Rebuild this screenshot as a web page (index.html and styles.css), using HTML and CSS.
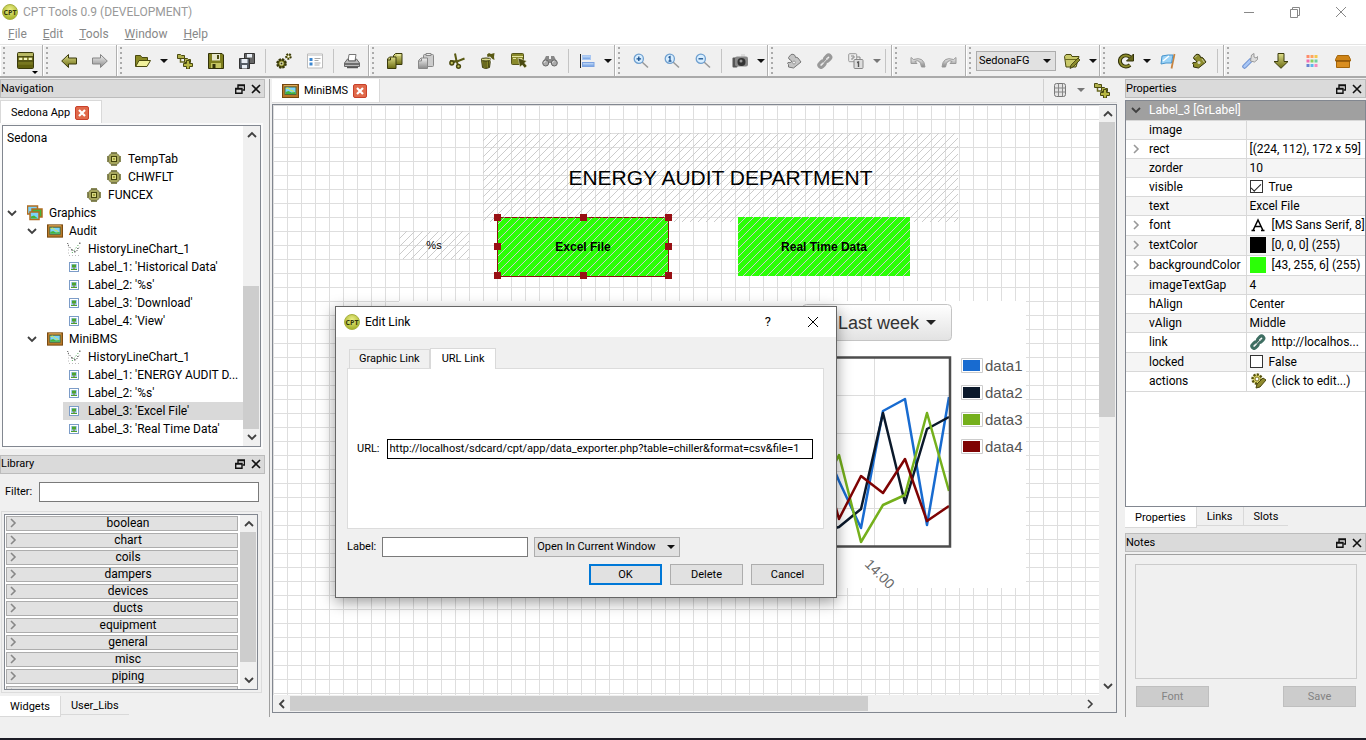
FILE: index.html
```html
<!DOCTYPE html>
<html lang="en">
<head>
<meta charset="utf-8">
<title>CPT Tools 0.9 (DEVELOPMENT)</title>
<link rel="stylesheet" href="styles.css">
</head>
<body>
<svg class="defs" aria-hidden="true">
  <defs>
    <linearGradient id="olive" x1="0" y1="0" x2="0" y2="1"><stop offset="0" stop-color="#dede8a"/><stop offset="1" stop-color="#6b6b12"/></linearGradient>
    <linearGradient id="grey" x1="0" y1="0" x2="0" y2="1"><stop offset="0" stop-color="#f2f2f2"/><stop offset="1" stop-color="#8a8a8a"/></linearGradient>
    <linearGradient id="blue" x1="0" y1="0" x2="0" y2="1"><stop offset="0" stop-color="#cde2fb"/><stop offset="1" stop-color="#6b9be0"/></linearGradient>
    <radialGradient id="ball" cx=".5" cy=".35" r=".6"><stop offset="0" stop-color="#eef08a"/><stop offset="1" stop-color="#a8b52c"/></radialGradient>
    <linearGradient id="btn" x1="0" y1="0" x2="0" y2="1"><stop offset="0" stop-color="#fff"/><stop offset="1" stop-color="#e2e2e2"/></linearGradient>
    <symbol id="i-board" viewBox="0 0 16 16"><rect x=".5" y=".5" width="15" height="15" rx="1.500" fill="#77771f" stroke="#3a3a0c"/><path d="M1 1h14v3H1z" fill="#b9b965"/><path d="M1 4.500h14M1 8.500h14" stroke="#3a3a0c"/><path d="M2 6.500h3M6.500 6.500h3M11 6.500h3" stroke="#f4f4c0" stroke-width="2"/><path d="M1 12h14v3H1z" fill="#62620f"/></symbol>
    <symbol id="i-left" viewBox="0 0 16 16"><path d="M.7 8 7.500 1.500V5h8v6h-8v3.500z" fill="url(#olive)" stroke="#3a3a0c"/></symbol>
    <symbol id="i-right" viewBox="0 0 16 16"><path d="M15.300 8 8.500 1.500V5h-8v6h8v3.500z" fill="url(#grey)" stroke="#858585"/></symbol>
    <symbol id="i-down" viewBox="0 0 16 16"><path d="M8 15.300 1 8.500h4v-8h6v8h4z" fill="url(#olive)" stroke="#3a3a0c"/></symbol>
    <symbol id="i-open" viewBox="0 0 16 16"><path d="M.5 13.500V2.500h5l1.500 2h5.500v3" fill="#8a8a24" stroke="#4a4a10"/><path d="M.7 13.500 4 7.500h11.500L12 13.500z" fill="#f1f19c" stroke="#4a4a10"/></symbol>
    <symbol id="i-addfile" viewBox="0 0 16 16"><path d="M.5 1.500h3l1 1h3v3h-7zM7.500 5.500h3l1 1h2v3h-6z" fill="#b0b04c" stroke="#4a4a10"/><path d="M3.500 6v3h4" fill="none" stroke="#6a6a20" stroke-width="1.500"/><path d="M9.500 7.500h3v3h3v3h-3V16h-3v-2.500h-3v-3h3z" fill="#b7b742" stroke="#4a4a10"/></symbol>
    <symbol id="i-save" viewBox="0 0 16 16"><path d="M.5.5H14l1.500 1.500v13.500H.5z" fill="#7e7e1e" stroke="#33330a"/><path d="M4 1h8v6.500H4z" fill="#e5e5cc"/><path d="M9 2h2v4H9z" fill="#4a4a10"/><path d="M3 10h10v5H3z" fill="#c5c560"/><path d="M4.500 11h3v4h-3z" fill="#33330a"/></symbol>
    <symbol id="i-saveall" viewBox="0 0 16 16"><path d="M5.500.5h10v10h-10z" fill="#666" stroke="#333"/><path d="M8 1h5v3.500H8z" fill="#e8eef5"/><path d="M.5 5.500h10v10H.5z" fill="#555d66" stroke="#333"/><path d="M2.500 6h6v4h-6zM3 12h5v3.500H3z" fill="#e8eef5"/></symbol>
    <symbol id="i-gears" viewBox="0 0 16 16"><circle cx="5.500" cy="10.500" r="4.200" fill="#55550f" stroke="#38380a" stroke-width="2.200" stroke-dasharray="2.200 1.100"/><circle cx="5.500" cy="10.500" r="2.200" fill="#f0f0d0" stroke="#9a9a35"/><circle cx="5.500" cy="10.500" r="1" fill="#38380a"/><circle cx="12.500" cy="3.500" r="2.300" fill="#a5a542" stroke="#38380a" stroke-width="2" stroke-dasharray="1.600 1"/><circle cx="12.500" cy="3.500" r="1" fill="#fff"/></symbol>
    <symbol id="i-form" viewBox="0 0 16 16"><path d="M.5 1h15v14H.5z" fill="#fff" stroke="#bbb"/><path d="M1 1.500h14v1.500H1z" fill="#ddd"/><path d="M2.500 5h3v3h-3zM2.500 9.500h3v3h-3z" fill="#3b86cf"/><path d="M7.500 5.500h6M7.500 7.500h4M7.500 10h6M7.500 12h5" stroke="#aaa"/></symbol>
    <symbol id="i-print" viewBox="0 0 16 16"><path d="M5 1.500h7L11 8H4z" fill="#fff" stroke="#777"/><path d="m3.500 6-3 4v3.500h15V10l-3-4h-1v2h-7V6z" fill="#bbb" stroke="#666"/><path d="M1 11h14M3 14.500h11" stroke="#555" stroke-width="1.500"/></symbol>
    <symbol id="i-copy" viewBox="0 0 16 16"><path d="M6.500 2.500 8.500.5h6.500v11H6.500z" fill="url(#olive)" stroke="#3a3a0c"/><path d="M10 2h3.500" stroke="#f5f5c0"/><path d="m.5 6 2-2H9v11.500H.5z" fill="url(#olive)" stroke="#3a3a0c"/><path d="M3.500 4.500v2.500H1" fill="none" stroke="#3a3a0c"/></symbol>
    <symbol id="i-paste" viewBox="0 0 16 16"><rect x="5.500" y="1.500" width="10" height="12" rx="1" fill="#ccc" stroke="#888"/><path d="M8 .5h5v2H8z" fill="#eee" stroke="#888"/><path d="M.5 7.500 3 5h6.500v10.500h-9z" fill="url(#grey)" stroke="#888"/><path d="M3.500 5.500V8H1" fill="none" stroke="#888"/></symbol>
    <symbol id="i-cut" viewBox="0 0 16 16"><path d="M6 .5 7.500 8 4 9.500M15.500 5.500 8 8.500 1 8M7.500 8l1.500 4" fill="none" stroke="#5a5a14" stroke-width="2"/><circle cx="2.800" cy="10" r="1.900" fill="#c5c560" stroke="#4a4a10" stroke-width="1.500"/><circle cx="9.500" cy="13.300" r="1.900" fill="#c5c560" stroke="#4a4a10" stroke-width="1.500"/></symbol>
    <symbol id="i-trash" viewBox="0 0 16 16"><path d="m1.500 6.500 1 8q3 2 7 0l1-8z" fill="#9a9a33" stroke="#3a3a0c"/><path d="M4 8v6M6 8v7M8.300 8v6" stroke="#3a3a0c"/><ellipse cx="6" cy="6.500" rx="5" ry="1.500" fill="#dada8a" stroke="#3a3a0c"/><path d="M7 1.500 9 0l2 1 3.500-1-.5 4 .5 3-2-1-2.500-2.500-2.500.5z" fill="#5a5a14"/><path d="m9.500 5 3.500 5-1.500.5z" fill="#fff"/></symbol>
    <symbol id="i-select" viewBox="0 0 16 16"><rect x=".5" y=".5" width="12" height="11" rx="1" fill="#8a8a2c" stroke="#55551a"/><path d="M1 3.500h11M2 5.500h3M7 5.500h4" stroke="#e5e5a0"/><path d="m7 5 8.500 3-2 2 2.500 3-2.300 2-2.500-3L9 14z" fill="#4a4a10" stroke="#efeec8" stroke-width=".5"/></symbol>
    <symbol id="i-find" viewBox="0 0 16 16"><path d="M4 3h3v3h2V3h3l3.500 7H.5z" fill="#888"/><circle cx="3.700" cy="10" r="3" fill="#aaa" stroke="#666"/><circle cx="12.300" cy="10" r="3" fill="#aaa" stroke="#666"/><path d="M2 10q0-2 2-2M10.500 10q0-2 2-2" stroke="#ddd" fill="none"/></symbol>
    <symbol id="i-align" viewBox="0 0 16 16"><path d="M1.500 1v14" stroke="#222"/><rect x="3.500" y="2.500" width="8" height="4" fill="url(#blue)" stroke="#a9c7f2"/><rect x="3.500" y="9.500" width="11.500" height="4" fill="url(#blue)" stroke="#7ca2e0"/></symbol>
    <symbol id="i-lens" viewBox="0 0 16 16"><path d="m9 9 6 5.500" stroke="#999" stroke-width="1.500"/><circle cx="5.800" cy="5.800" r="4.600" fill="#d8eeff" stroke="#6fa0d0" stroke-width="1.300"/></symbol>
    <symbol id="i-cam" viewBox="0 0 16 16"><rect x="9" y="1" width="4" height="3" fill="#ddd"/><rect x=".5" y="4.500" width="5" height="10" rx="1" fill="#555"/><rect x="3" y="3.500" width="13" height="10" rx="2" fill="#888"/><circle cx="9.500" cy="9" r="4" fill="#333"/><circle cx="9" cy="8" r="1.500" fill="#999"/></symbol>
    <symbol id="i-puzzle" viewBox="0 0 16 16"><path d="M2.500 4.500 5 1.500q2-1 4 1l.5 2q1.500-.5 2.500.5l3 4-7.500 6-5-1v-2.500q-1.500-1-.5-2 2.500.5 3.500-.5T3 6z" fill="currentColor" stroke="#33330c"/><path d="m4 4.500 2-2M11 6l2.500 3.500" stroke="#fff" opacity=".6"/><circle cx="8" cy="9.500" r="1.500" fill="#eee" opacity=".8"/></symbol>
    <symbol id="i-puzzle-off" viewBox="0 0 16 16"><path d="M2.500 4.500 5 1.500q2-1 4 1l.5 2q1.500-.5 2.500.5l3 4-7.500 6-5-1v-2.500q-1.500-1-.5-2 2.500.5 3.500-.5T3 6z" fill="#c4c4c4" stroke="#777"/><circle cx="8" cy="9.500" r="1.500" fill="#eee" stroke="#999"/></symbol>
    <symbol id="i-chain" viewBox="0 0 16 16"><g fill="none" stroke="currentColor" stroke-width="3"><rect x="8.500" y="1.500" width="4.500" height="7" rx="2.200" transform="rotate(45 10.500 5)"/><rect x="3" y="8" width="4.500" height="7" rx="2.200" transform="rotate(45 5.500 11)"/></g><path d="m5 11.500 6-6.500" stroke="#ddd"/></symbol>
    <symbol id="i-order" viewBox="0 0 16 16"><rect x=".7" y=".7" width="8" height="8" rx="1" fill="#eee" stroke="#999"/><path d="M3 3h3v2H4v2M9 4h3v2" fill="none" stroke="#888"/><rect x="6" y="6.500" width="9" height="9" rx="1" fill="#ddd" stroke="#888"/><path d="M9 9.500 10.500 9v5" fill="none" stroke="#555" stroke-width="1.400"/></symbol>
    <symbol id="i-undo" viewBox="0 0 16 16"><path d="M1 4.500v6h6L5 8.500q5-3 6.500 5.500h3.500Q14 3 3.500 6.500z" fill="url(#grey)" stroke="#999"/></symbol>
    <symbol id="i-folderpen" viewBox="0 0 16 16"><path d="M.5 3.500 2 1.500h5l1 2h7L12 14H2z" fill="#c9c96a" stroke="#4a4a10"/><path d="M1 6.500h13" stroke="#6a6a20"/><path d="m14 5 2 2-7 7-3 1.500L7 12z" fill="#8c8c2c" stroke="#3a3a0c" stroke-width=".8"/></symbol>
    <symbol id="i-reload" viewBox="0 0 16 16"><path d="M12 12A6 5.500 0 1 1 12 4" fill="none" stroke="#33330a" stroke-width="4"/><path d="M12 12A6 5.500 0 1 1 12 4" fill="none" stroke="#8c8c2c" stroke-width="1.800"/><path d="M15.500 1v7H8.500z" fill="#66661a" stroke="#33330a"/></symbol>
    <symbol id="i-flag" viewBox="0 0 16 16"><path d="m14.500 1-3 14.500" stroke="#c88440" stroke-width="1.800"/><path d="m2 3 6-1 5 0-1.500 8H6l-5 1z" fill="#9bd3f7" stroke="#4794cc"/><path d="m3 8 6-5" stroke="#fff" stroke-width="1.500"/></symbol>
    <symbol id="i-wrench" viewBox="0 0 16 16"><path d="m2.500 13.500 6-6" stroke="#688cce" stroke-width="4.500" stroke-linecap="round"/><path d="m2.500 13.500 6-6" stroke="#a8c6f5" stroke-width="2.500" stroke-linecap="round"/><path d="m8.500 8 1-6 2.500-1.500V4l2 1 1.700-1.500-.2 3-3 2.500z" fill="#ddd" stroke="#999"/></symbol>
    <symbol id="i-palette" viewBox="0 0 16 16"><path d="M2.500 2h3v3h-3z" fill="#ff8c69"/><path d="M6.500 2h3v3h-3z" fill="#ffa45e"/><path d="M10.500 2h3v3h-3z" fill="#f5c84c"/><path d="M2.500 6.500h3v3h-3z" fill="#f06cb0"/><path d="M6.500 6.500h3v3h-3z" fill="#8bd060"/><path d="M10.500 6.500h3v3h-3z" fill="#72cfa0"/><path d="M2.500 11h3v3h-3z" fill="#6884d0"/><path d="M6.500 11h3v3h-3z" fill="#5cb8ec"/><path d="M10.500 11h3v3h-3z" fill="#f58ac0"/></symbol>
    <symbol id="i-box" viewBox="0 0 16 16"><path d="m.5 6.500 2-4h11l2 4V8H.5z" fill="#cf8416" stroke="#a4650a"/><path d="M1.500 8h13v6.500h-13z" fill="#d98e20" stroke="#a4650a"/><path d="M1 8h14" stroke="#7f4b05"/></symbol>
    <symbol id="i-cpt" viewBox="0 0 16 16"><circle cx="8" cy="8" r="7.500" fill="url(#ball)" stroke="#a7b040"/><text x="8" y="10.500" text-anchor="middle" class="cpt-text">CPT</text></symbol>
    <symbol id="i-chip" viewBox="0 0 16 16"><path d="M5 1h6v14H5zM1 5h14v6H1z" fill="#8a8a58"/><path d="M3.500 4 5 2.500h6L12.500 4l1 1.500v5l-1 1.500-1.500 1.500H5L3.500 12l-1-1.500v-5z" fill="#a5a55c" stroke="#77774a"/><rect x="5.500" y="5.500" width="5" height="5" fill="#d8d884" stroke="#44440e"/><path d="M7 7h2v2H7z" fill="#a5a53c"/></symbol>
    <symbol id="i-frame" viewBox="0 0 17 14"><rect x=".5" y=".5" width="16" height="13" fill="#b87828" stroke="#74460d"/><path d="M2 1.500h13" stroke="#dfab5c"/><rect x="3" y="3" width="11" height="7.500" fill="#7bd3fa" stroke="#4c6a3e"/><path d="m3.500 10 0-2 3-1 3 1.500 4-.5V10z" fill="#43b43b"/><path d="m4 4.500 2-.5 3 2.500 3 1" stroke="#d9ed3e" fill="none"/></symbol>
    <symbol id="i-frames" viewBox="0 0 16 16"><rect x=".5" y="1" width="10" height="8" fill="#7bd3fa" stroke="#b06c20" stroke-width="1.500"/><rect x="5" y="4" width="10" height="8" fill="#43b43b" stroke="#b06c20" stroke-width="1.500"/><rect x="3" y="7" width="9" height="7.500" fill="#7bd3fa" stroke="#b06c20" stroke-width="1.500"/><path d="M4 13.500v-2l3-1 4 3z" fill="#43b43b"/></symbol>
    <symbol id="i-chart" viewBox="0 0 16 16"><g fill="none" stroke-dasharray="1 2"><path d="M2.500 2.500v12M3 14.500h11" stroke="#bbb"/><path d="m6 12 3-4 5-6" stroke="#2d9b35"/><path d="m2 4 4 5 4 2 4-6" stroke="#333"/></g><path d="M1 2h1v1H1zM5 8h1.500v1.500H5zM8 10h1.500v1.500H8zM11 7h1v1h-1zM13 1.500h1.500V3H13z" fill="#777"/></symbol>
    <symbol id="i-label" viewBox="0 0 10 10"><rect x=".5" y=".5" width="9" height="9" fill="#fff" stroke="#7c9cc8"/><path d="M2 2h6v6H2z" fill="#a6cdf0"/><path d="M3 2.500h4v3H3zM2 7h6v1H2z" fill="#4ba32e"/><path d="M4.500 5.500h1V7h-1z" fill="#7b5520"/></symbol>
    <symbol id="i-float" viewBox="0 0 10 10"><path d="M3 4V1h6.500v5H7.500M3 1.500h6.500" fill="none" stroke="#111" stroke-width="1.400"/><path d="M.7 4.500h6.300v4.800H.7zM.7 5h6.300" fill="none" stroke="#111" stroke-width="1.400"/></symbol>
    <symbol id="i-x" viewBox="0 0 10 10"><path d="m1 1 8 8M9 1 1 9" stroke="#111" stroke-width="1.600"/></symbol>
    <symbol id="i-close" viewBox="0 0 14 14"><rect x=".5" y=".5" width="13" height="13" rx="1.500" fill="#e0694a" stroke="#c8402a"/><path d="m4 4 6 6M10 4l-6 6" stroke="#fff" stroke-width="2.200"/></symbol>
    <symbol id="i-chevd" viewBox="0 0 10 10"><path d="m1 3 4 4 4-4" fill="none" stroke="#404040" stroke-width="1.800"/></symbol>
    <symbol id="i-chevu" viewBox="0 0 10 10"><path d="m1 7 4-4 4 4" fill="none" stroke="#404040" stroke-width="1.800"/></symbol>
    <symbol id="i-chevr" viewBox="0 0 10 10"><path d="m3 1 4 4-4 4" fill="none" stroke="currentColor" stroke-width="1.600"/></symbol>
    <symbol id="i-chevl" viewBox="0 0 10 10"><path d="M7 1 3 5l4 4" fill="none" stroke="#404040" stroke-width="1.800"/></symbol>
    <symbol id="i-grid" viewBox="0 0 16 16"><rect x="2.500" y="1.500" width="11" height="13" rx="2" fill="#e4e4e4" stroke="#777"/><path d="M6.500 1.500v13M10.500 1.500v13M2.500 6h11M2.500 10h11" stroke="#888"/></symbol>
    <symbol id="i-edit" viewBox="0 0 16 16"><circle cx="7" cy="6" r="4.500" fill="#e2db6c" stroke="#58540f" stroke-width="2.500" stroke-dasharray="2.200 1.200"/><circle cx="7" cy="6" r="2" fill="#fff" stroke="#77701f"/><path d="m6 15 1-4 6-6 3 2-6 7z" fill="#8f8a2e" stroke="#4a460c"/></symbol>
  </defs>
</svg>

<header class="titlebar">
  <svg class="ic16"><use href="#i-cpt"/></svg>
  <span class="title">CPT Tools 0.9 (DEVELOPMENT)</span>
  <button class="winbtn" aria-label="Minimize"><svg viewBox="0 0 12 12"><path d="M1 6.500h10"/></svg></button>
  <button class="winbtn" aria-label="Restore"><svg viewBox="0 0 12 12"><path d="M1.500 3.500h7v8h-7zM3.500 3.500v-2h7v8h-2"/></svg></button>
  <button class="winbtn" aria-label="Close"><svg viewBox="0 0 12 12"><path d="m1 1 10 10M11 1 1 11"/></svg></button>
</header>
<nav class="menubar">
  <button><u>F</u>ile</button><button><u>E</u>dit</button><button><u>T</u>ools</button><button><u>W</u>indow</button><button><u>H</u>elp</button>
</nav>

<div class="toolbar">
  <div class="group"><button class="tool" aria-label="Board"><svg class="big"><use href="#i-board"/></svg><i class="corner"></i></button></div>
  <div class="group"><button class="tool" aria-label="Back"><svg><use href="#i-left"/></svg></button><button class="tool" aria-label="Forward"><svg><use href="#i-right"/></svg></button></div>
  <div class="group"><button class="tool" aria-label="Open"><svg><use href="#i-open"/></svg></button><button class="drop" aria-label="Open menu"></button><button class="tool" aria-label="Add"><svg><use href="#i-addfile"/></svg></button><button class="tool" aria-label="Save"><svg><use href="#i-save"/></svg></button><button class="tool" aria-label="Save all"><svg><use href="#i-saveall"/></svg></button><i class="sep"></i><button class="tool" aria-label="Settings"><svg><use href="#i-gears"/></svg></button><button class="tool" aria-label="Form"><svg><use href="#i-form"/></svg></button><i class="sep"></i><button class="tool" aria-label="Print"><svg><use href="#i-print"/></svg></button></div>
  <div class="group"><button class="tool" aria-label="Copy"><svg><use href="#i-copy"/></svg></button><button class="tool" aria-label="Paste"><svg><use href="#i-paste"/></svg></button><button class="tool" aria-label="Cut"><svg><use href="#i-cut"/></svg></button><button class="tool" aria-label="Delete"><svg><use href="#i-trash"/></svg></button><button class="tool" aria-label="Select"><svg><use href="#i-select"/></svg></button><button class="tool" aria-label="Find"><svg><use href="#i-find"/></svg></button><i class="sep"></i><button class="tool" aria-label="Align"><svg><use href="#i-align"/></svg></button><button class="drop" aria-label="Align menu"></button></div>
  <div class="group"><button class="tool" aria-label="Zoom in"><svg viewBox="0 0 16 16"><use href="#i-lens"/><path d="M3.500 5.800h4.600M5.800 3.500v4.600" stroke="#174e8c" stroke-width="1.300"/></svg></button><button class="tool" aria-label="Zoom 1:1"><svg viewBox="0 0 16 16"><use href="#i-lens"/><path d="m4.500 4.500 1.500-1v5M4.500 8.200h3" fill="none" stroke="#174e8c" stroke-width="1.200"/></svg></button><button class="tool" aria-label="Zoom out"><svg viewBox="0 0 16 16"><use href="#i-lens"/><path d="M3.500 5.800h4.600" stroke="#174e8c" stroke-width="1.300"/></svg></button><i class="sep"></i><button class="tool" aria-label="Camera"><svg><use href="#i-cam"/></svg></button><button class="drop" aria-label="Camera menu"></button></div>
  <div class="group"><button class="tool" aria-label="Component"><svg><use href="#i-puzzle-off"/></svg></button><button class="tool" aria-label="Link"><svg><use href="#i-chain"/></svg></button><button class="tool" aria-label="Order"><svg><use href="#i-order"/></svg></button><button class="drop dim" aria-label="Order menu"></button><i class="sep"></i></div>
  <div class="group"><button class="tool" aria-label="Undo"><svg><use href="#i-undo"/></svg></button><button class="tool" aria-label="Redo"><svg class="flip"><use href="#i-undo"/></svg></button></div>
  <div class="group"><span class="combo combo-project"><select aria-label="Project"><option>SedonaFG</option></select></span><button class="tool" aria-label="Edit project"><svg><use href="#i-folderpen"/></svg></button><button class="drop" aria-label="Project menu"></button></div>
  <div class="group"><button class="tool" aria-label="Reload"><svg><use href="#i-reload"/></svg></button><button class="drop" aria-label="Reload menu"></button><button class="tool" aria-label="Flag"><svg><use href="#i-flag"/></svg></button><button class="tool on" aria-label="Plugin"><svg><use href="#i-puzzle"/></svg></button><i class="sep"></i></div>
  <div class="group last"><button class="tool" aria-label="Tools"><svg><use href="#i-wrench"/></svg></button><button class="tool" aria-label="Download"><svg><use href="#i-down"/></svg></button><button class="tool" aria-label="Palette"><svg><use href="#i-palette"/></svg></button><button class="tool" aria-label="Package"><svg><use href="#i-box"/></svg></button></div>
</div>

<main class="work">
  <aside class="left">
    <div class="dockhead"><h2>Navigation</h2><button aria-label="Float"><svg><use href="#i-float"/></svg></button><button aria-label="Close"><svg><use href="#i-x"/></svg></button></div>
    <div class="toptabs"><button class="tab active">Sedona App <svg class="ic14"><use href="#i-close"/></svg></button></div>
    <section class="treebox">
      <div class="treemain">
        <div class="treehead">Sedona</div>
        <ul class="tree">
          <li class="d5"><svg class="ic16"><use href="#i-chip"/></svg>TempTab</li>
          <li class="d5"><svg class="ic16"><use href="#i-chip"/></svg>CHWFLT</li>
          <li class="d4"><svg class="ic16"><use href="#i-chip"/></svg>FUNCEX</li>
          <li class="d1"><svg class="tw"><use href="#i-chevd"/></svg><svg class="ic16"><use href="#i-frames"/></svg>Graphics</li>
          <li class="d2"><svg class="tw"><use href="#i-chevd"/></svg><svg class="ic16"><use href="#i-frame"/></svg>Audit</li>
          <li class="d3"><svg class="ic16"><use href="#i-chart"/></svg>HistoryLineChart_1</li>
          <li class="d3"><svg class="ic16 lab"><use href="#i-label"/></svg>Label_1: 'Historical Data'</li>
          <li class="d3"><svg class="ic16 lab"><use href="#i-label"/></svg>Label_2: '%s'</li>
          <li class="d3"><svg class="ic16 lab"><use href="#i-label"/></svg>Label_3: 'Download'</li>
          <li class="d3"><svg class="ic16 lab"><use href="#i-label"/></svg>Label_4: 'View'</li>
          <li class="d2"><svg class="tw"><use href="#i-chevd"/></svg><svg class="ic16"><use href="#i-frame"/></svg>MiniBMS</li>
          <li class="d3"><svg class="ic16"><use href="#i-chart"/></svg>HistoryLineChart_1</li>
          <li class="d3"><svg class="ic16 lab"><use href="#i-label"/></svg>Label_1: 'ENERGY AUDIT D...</li>
          <li class="d3"><svg class="ic16 lab"><use href="#i-label"/></svg>Label_2: '%s'</li>
          <li class="d3 sel"><svg class="ic16 lab"><use href="#i-label"/></svg>Label_3: 'Excel File'</li>
          <li class="d3"><svg class="ic16 lab"><use href="#i-label"/></svg>Label_3: 'Real Time Data'</li>
        </ul>
      </div>
      <div class="vscroll"><svg><use href="#i-chevu"/></svg><div class="track"><i class="thumb nav-thumb"></i></div><svg><use href="#i-chevd"/></svg></div>
    </section>
    <div class="dockhead"><h2>Library</h2><button aria-label="Float"><svg><use href="#i-float"/></svg></button><button aria-label="Close"><svg><use href="#i-x"/></svg></button></div>
    <div class="filter"><label for="filter">Filter:</label><input id="filter" type="text"></div>
    <section class="libframe"><div class="libbox">
      <div class="liblist">
        <button><svg><use href="#i-chevr"/></svg>boolean</button>
        <button><svg><use href="#i-chevr"/></svg>chart</button>
        <button><svg><use href="#i-chevr"/></svg>coils</button>
        <button><svg><use href="#i-chevr"/></svg>dampers</button>
        <button><svg><use href="#i-chevr"/></svg>devices</button>
        <button><svg><use href="#i-chevr"/></svg>ducts</button>
        <button><svg><use href="#i-chevr"/></svg>equipment</button>
        <button><svg><use href="#i-chevr"/></svg>general</button>
        <button><svg><use href="#i-chevr"/></svg>misc</button>
        <button><svg><use href="#i-chevr"/></svg>piping</button>
        <button aria-label="More"><svg><use href="#i-chevr"/></svg></button>
      </div>
      <div class="vscroll"><svg><use href="#i-chevu"/></svg><div class="track"><i class="thumb lib-thumb"></i></div><svg><use href="#i-chevd"/></svg></div>
    </div></section>
    <div class="bottabs"><button class="tab active">Widgets</button><button class="tab">User_Libs</button></div>
  </aside>

  <section class="center">
    <div class="doctabs">
      <button class="tab active"><svg class="frame"><use href="#i-frame"/></svg>MiniBMS <svg class="ic14"><use href="#i-close"/></svg></button>
      <div class="doctools"><button class="tool" aria-label="Grid"><svg><use href="#i-grid"/></svg></button><button class="drop dim" aria-label="Grid menu"></button><button class="tool" aria-label="Add widget"><svg><use href="#i-addfile"/></svg></button></div>
    </div>
    <div class="view">
      <div class="canvas">
        <div class="widget heading">ENERGY AUDIT DEPARTMENT</div>
        <div class="widget small">%s</div>
        <div class="widget green excel">Excel File
          <svg class="handles" viewBox="0 0 180 66"><path d="M4.500 4.500v58M175.500 4.500v58M4.500 62.500h171" fill="none"/><path d="M4.500 3.500h171" stroke-dasharray="6 1"/><path class="grips" d="M1 0h7v7H1zM87 0h7v7h-7zM172 0h7v7h-7zM1 29h7v7H1zM172 29h7v7h-7zM1 58h7v7H1zM87 58h7v7h-7zM172 58h7v7h-7z"/></svg>
        </div>
        <div class="widget green realtime">Real Time Data</div>
        <svg class="history" viewBox="399 301 627 287">
          <rect x="399" y="301" width="627" height="287" fill="#fff"/>
          <rect x="802.500" y="304.500" width="149" height="36" rx="4" fill="url(#btn)" stroke="#c4c4c4"/>
          <text x="838" y="329" class="range">Last week</text>
          <path d="M926 320h10l-5 5z" fill="#222"/>
          <path d="M440 395.500h509M440 433.500h509M440 471.500h509M440 508.500h509M874.500 358v188" stroke="#ddd" fill="none"/>
          <g fill="none" stroke-width="2.500" stroke-linejoin="round">
            <path d="m817 430 22 51 22 47 22-117 22-12 22 126 22-128" stroke="#186bd0"/>
            <path d="m817 533 22-6 22-18 22-96 22 90 22-74 22-12" stroke="#0b192b"/>
            <path d="m817 500 22-45 22 87 22-37 22-10 22-82 22 78" stroke="#75b01c"/>
            <path d="m817 440 22 79 22-43 22 17 22-34 22 62 22-15" stroke="#7f0303"/>
          </g>
          <rect x="440" y="357.500" width="510" height="189" fill="none" stroke="#4d4d4d" stroke-width="2.500"/>
          <g class="legend">
            <path d="M961.500 358.500h21v14h-21zM961.500 385.500h21v14h-21zM961.500 412.500h21v14h-21zM961.500 439.500h21v14h-21z" fill="#fff" stroke="#ccc"/>
            <path d="M963 360h17v11h-17z" fill="#186bd0"/><path d="M963 387h17v11h-17z" fill="#0b192b"/><path d="M963 414h17v11h-17z" fill="#75b01c"/><path d="M963 441h17v11h-17z" fill="#7f0303"/>
            <text x="985" y="371">data1</text><text x="985" y="398">data2</text><text x="985" y="425">data3</text><text x="985" y="452">data4</text>
          </g>
          <text transform="translate(864 565) rotate(45)" class="tick">14:00</text>
        </svg>
      </div>
      <div class="vscroll"><svg><use href="#i-chevu"/></svg><div class="track"><i class="thumb view-thumb"></i></div><svg><use href="#i-chevd"/></svg></div>
      <div class="hscroll"><svg><use href="#i-chevl"/></svg><div class="track"><i class="thumb"></i></div><svg class="dark"><use href="#i-chevr"/></svg></div>
    </div>
  </section>

  <aside class="right">
    <div class="dockhead"><h2>Properties</h2><button aria-label="Float"><svg><use href="#i-float"/></svg></button><button aria-label="Close"><svg><use href="#i-x"/></svg></button></div>
    <div class="propbox">
      <table class="props">
        <colgroup><col class="c-tg"><col class="c-name"><col></colgroup>
        <thead><tr><th class="tg"><svg><use href="#i-chevd"/></svg></th><th colspan="2">Label_3 [GrLabel]</th></tr></thead>
        <tbody>
          <tr><td class="tg"></td><th>image</th><td></td></tr>
          <tr><td class="tg"><svg><use href="#i-chevr"/></svg></td><th>rect</th><td>[(224, 112), 172 x 59]</td></tr>
          <tr><td class="tg"></td><th>zorder</th><td>10</td></tr>
          <tr><td class="tg"></td><th>visible</th><td><label class="check"><input type="checkbox" checked>True</label></td></tr>
          <tr><td class="tg"></td><th>text</th><td>Excel File</td></tr>
          <tr class="tall"><td class="tg"><svg><use href="#i-chevr"/></svg></td><th>font</th><td><span class="val"><svg class="ic16" viewBox="0 0 16 16"><path d="M3 13.500 8 3l5 10.500M5 9.500h6M1.500 13.500H5M11 13.500h3.500" fill="none" stroke="#000" stroke-width="1.500"/></svg>[MS Sans Serif, 8]</span></td></tr>
          <tr class="tall"><td class="tg"><svg><use href="#i-chevr"/></svg></td><th>textColor</th><td><span class="val"><i class="swatch black"></i>[0, 0, 0] (255)</span></td></tr>
          <tr class="tall"><td class="tg"><svg><use href="#i-chevr"/></svg></td><th>backgroundColor</th><td><span class="val"><i class="swatch lime"></i>[43, 255, 6] (255)</span></td></tr>
          <tr><td class="tg"></td><th>imageTextGap</th><td>4</td></tr>
          <tr><td class="tg"></td><th>hAlign</th><td>Center</td></tr>
          <tr><td class="tg"></td><th>vAlign</th><td>Middle</td></tr>
          <tr class="tall current"><td class="tg"></td><th>link</th><td><span class="val"><svg class="ic16 teal"><use href="#i-chain"/></svg>http://localhos...</span></td></tr>
          <tr><td class="tg"></td><th>locked</th><td><label class="check"><input type="checkbox">False</label></td></tr>
          <tr class="tall"><td class="tg"></td><th>actions</th><td><span class="val"><svg class="ic16"><use href="#i-edit"/></svg>(click to edit...)</span></td></tr>
        </tbody>
      </table>
    </div>
    <div class="bottabs"><button class="tab active">Properties</button><button class="tab">Links</button><button class="tab">Slots</button></div>
    <div class="dockhead"><h2>Notes</h2><button aria-label="Float"><svg><use href="#i-float"/></svg></button><button aria-label="Close"><svg><use href="#i-x"/></svg></button></div>
    <div class="notes">
      <textarea aria-label="Notes" disabled></textarea>
      <div class="notebtns"><button class="push" disabled>Font</button><button class="push" disabled>Save</button></div>
    </div>
  </aside>
</main>
<footer class="status"></footer>

<div class="dialog" role="dialog" aria-labelledby="dlg-title">
  <div class="dlghead"><svg class="ic16"><use href="#i-cpt"/></svg><h1 id="dlg-title">Edit Link</h1><button class="help" aria-label="Help">?</button><button aria-label="Close"><svg viewBox="0 0 12 12"><path d="m1 1 10 10M11 1 1 11" stroke="#000"/></svg></button></div>
  <form class="dlgbody">
    <div class="dlgtabs"><button type="button" class="tab">Graphic Link</button><button type="button" class="tab active">URL Link</button></div>
    <div class="pane"><label for="url">URL:</label><input id="url" type="text" value="http://localhost/sdcard/cpt/app/data_exporter.php?table=chiller&amp;format=csv&amp;file=1"></div>
    <div class="labelrow"><label for="lbl">Label:</label><input id="lbl" type="text"><span class="combo combo-target"><select aria-label="Target"><option>Open In Current Window</option></select></span></div>
    <div class="actions"><button type="button" class="push default">OK</button><button type="button" class="push">Delete</button><button type="button" class="push">Cancel</button></div>
  </form>
</div>
</body>
</html>
```
FILE: styles.css
```css
* { box-sizing: border-box; }
body {
  margin: 0;
  height: 100vh;
  display: flex;
  flex-direction: column;
  overflow: hidden;
  background: #f0f0f0;
  color: #000;
  font: 11px/14px Roboto, "Open Sans", sans-serif;
}
button, input, select, textarea { font: inherit; color: inherit; margin: 0; padding: 0; border: 0; border-radius: 0; background: none; }
h1, h2 { margin: 0; font-size: 11px; font-weight: 400; }
svg { display: block; flex: none; }
i { display: block; }
.defs { position: absolute; width: 0; height: 0; }
.cpt-text { font: bold 7px "Open Sans", sans-serif; fill: #33380a; }
.ic16 { width: 16px; height: 16px; }
.ic14 { width: 14px; height: 14px; }

.titlebar { flex: none; display: flex; align-items: center; height: 23px; padding-left: 2px; padding-right: 2px; background: #fff; color: #999; font-size: 12px; }
.title { flex: 1; padding-left: 5px; }
.winbtn { width: 46px; height: 20px; display: grid; place-items: center; }
.winbtn svg { width: 12px; height: 12px; fill: none; stroke: #888; }
.menubar { flex: none; display: flex; gap: 16px; height: 21px; padding-left: 8px; background: #fff; color: #888; font-size: 12px; }

.toolbar { flex: none; display: flex; height: 34px; border-top: 1px solid #e4e4e4; border-bottom: 2px solid #aaa; }
.group { display: flex; align-items: center; padding-right: 1px; border-right: 1px solid #b0b0b0; box-shadow: inset 1px 1px #fff; }
.group.last { flex: 1; border-right: 0; }
.group::before { content: ""; width: 3px; height: 27px; margin: 0 4px 0 3px; background: radial-gradient(circle at 1px 1px, #aaa 1px, transparent 1px) 0 0 / 3px 5px; }
.tool { position: relative; width: 31px; height: 30px; display: grid; place-items: center; color: #999; }
.tool svg { width: 16px; height: 16px; }
.tool svg.big { width: 17px; height: 17px; }
.tool svg.flip { transform: scaleX(-1); }
.tool.on { color: #8c8c2c; }
.corner { position: absolute; right: 3px; bottom: 2px; border: 3px solid transparent; border-top-color: #000; border-bottom: 0; }
.drop { width: 11px; height: 30px; display: grid; place-items: center; }
.drop::before, .combo::after { content: ""; border: 4px solid transparent; border-top-color: #111; border-bottom: 0; }
.drop.dim::before { border-top-color: #777; }
.sep { width: 6px; height: 24px; background: linear-gradient(#c4c4c4, #c4c4c4) 3px 0 / 1px 100% no-repeat; }
.sep:last-child { width: 8px; }
.combo { position: relative; display: block; }
.combo select { appearance: none; width: 100%; height: 20px; padding: 0 16px 0 2px; border: 1px solid #adadad; background: #e1e1e1; }
.combo::after { position: absolute; right: 5px; top: 8px; pointer-events: none; }
.combo-project { width: 80px; }

.work { flex: 1; min-height: 0; display: grid; grid-template-columns: 265px 1fr 241px; column-gap: 4px; padding-top: 1px; }
.left, .right, .center { display: flex; flex-direction: column; min-width: 0; min-height: 0; }
.dockhead { flex: none; display: flex; align-items: center; gap: 6px; height: 19px; padding: 0 3px 0 0; border: 1px solid #bcbcbc; background: #dadada; }
.dockhead h2 { flex: 1; }
.dockhead svg { width: 10px; height: 10px; }
.tab { display: flex; align-items: center; white-space: nowrap; }
.toptabs { flex: none; display: flex; height: 26px; padding-top: 2px; }
.toptabs .tab { gap: 5px; padding: 0 12px 0 10px; border: 1px solid #d9d9d9; border-bottom: 0; background: #fff; }

.treebox { flex: 327 1 0; min-height: 0; display: flex; margin: 1px 4px 8px 2px; border: 1px solid #828790; background: #fff; outline: 2px solid #fafafa; }
.treemain { flex: 1; min-width: 0; overflow: hidden; font-size: 12px; }
.treehead { height: 24px; padding: 5px 4px; }
.tree { margin: 0; padding: 0; list-style: none; }
.tree li { display: flex; align-items: center; height: 18px; white-space: nowrap; }
.tree .ic16 { margin-right: 6px; }
.tree .lab { padding: 3px; }
.tree .tw { width: 10px; height: 10px; margin-right: 10px; }
.d1 { padding-left: 4px; }
.d2 { padding-left: 24px; }
.d3 { margin-left: 60px; padding-left: 3px; }
.d4 { padding-left: 83px; }
.d5 { padding-left: 103px; }
.sel { background: #d9d9d9; }

.vscroll { flex: none; width: 17px; display: flex; flex-direction: column; align-items: center; padding: 4px 0; gap: 3px; background: #f0f0f0; }
.vscroll svg, .hscroll svg { width: 10px; height: 10px; }
.vscroll .track { flex: 1; width: 100%; padding-right: 1px; display: flex; flex-direction: column; }
.thumb { background: #cdcdcd; }
.nav-thumb { height: 50%; margin-top: auto; }
.lib-thumb { height: 93%; }
.view-thumb { height: 53%; }

.filter { flex: none; display: flex; align-items: center; gap: 7px; padding: 8px 6px 9px 5px; }
.filter input { flex: 1; height: 20px; border: 1px solid #7a7a7a; background: #fff; }
.libframe { flex: 180 1 0; min-height: 0; display: flex; padding: 2px 3px 2px 2px; margin: 0 3px 3px 1px; border: 1px solid #dcdcdc; }
.libbox { flex: 1; min-width: 0; display: flex; border: 1px solid #828790; background: #fff; }
.liblist { flex: 1; min-width: 0; display: flex; flex-direction: column; gap: 2px; padding: 1px 2px 0 1px; overflow: hidden; font-size: 12px; line-height: 13px; }
.liblist button { flex: none; display: flex; align-items: center; justify-content: center; position: relative; height: 15px; padding-left: 12px; border: 1px solid #adadad; background: #e1e1e1; }
.liblist svg { position: absolute; left: 1px; top: 1px; width: 10px; height: 10px; color: #888; }
.bottabs { flex: none; display: flex; align-items: flex-start; height: 21px; }
.bottabs .tab { height: 19px; padding: 1px 10px 0; border: 1px solid #d9d9d9; border-top: 0; border-left: 0; }
.bottabs .tab:last-child { border-right: 0; }
.bottabs .active { height: 21px; background: #fff; }

.center { padding: 0 4px 4px 2px; border-left: 1px solid #a0a0a0; }
.doctabs { flex: none; display: flex; justify-content: space-between; height: 24px; border-bottom: 1px solid #dcdcdc; margin-bottom: 1px; }
.doctabs .tab { gap: 5px; padding: 0 12px 0 10px; border-right: 1px solid #d9d9d9; background: #fff; }
.doctabs .frame { width: 17px; height: 14px; }
.doctools { display: flex; border-left: 1px solid #d0d0d0; }
.doctools .tool, .doctools .drop { height: 22px; }
.view { flex: 1; min-height: 0; display: grid; grid-template-columns: 1fr 17px; grid-template-rows: 1fr 17px; border: 1px solid #828790; background: #f0f0f0; }
.canvas { position: relative; overflow: hidden; background: repeating-linear-gradient(90deg, #dedede 0 1px, transparent 1px 14px), repeating-linear-gradient(180deg, #dedede 0 1px, #fff 1px 14px); }
.hscroll { display: flex; align-items: center; gap: 3px; padding: 0 4px; }
.hscroll .track { flex: 1; height: 15px; }
.hscroll .thumb { width: 73%; height: 100%; }
.dark { color: #404040; }
.widget { position: absolute; display: grid; place-items: center; background: linear-gradient(135deg, transparent 47%, #ccc 47% 53%, transparent 53%) 0 0 / 8px 8px; }
.heading { left: 210px; top: 28px; width: 475px; height: 89px; font: 21px/24px "Liberation Sans", Arial, sans-serif; }
.small { left: 126px; top: 126px; width: 70px; height: 28px; font: 11px/14px "Liberation Sans", Arial, sans-serif; }
.green { top: 112px; width: 172px; height: 59px; background-color: #2bff06; font: bold 12px/14px "Liberation Sans", Arial, sans-serif; }
.excel { left: 224px; }
.realtime { left: 465px; }
.handles { position: absolute; left: -4px; top: -3px; width: 180px; height: 66px; stroke: #8c1010; }
.handles .grips { fill: #981014; stroke: none; }
.history { position: absolute; left: 126px; top: 196px; width: 627px; height: 287px; overflow: visible; font-family: "Liberation Sans", Arial, sans-serif; }
.range { font-size: 18px; fill: #333; }
.legend text { font-size: 15px; fill: #555; }
.tick { font-size: 14px; fill: #666; }

.propbox { flex: 406 1 0; min-height: 0; margin-top: 2px; border: 1px solid #828790; background: #fff; overflow: hidden; }
.props { width: 100%; border-collapse: collapse; table-layout: fixed; font-size: 12px; line-height: 14px; }
.c-tg { width: 20px; }
.c-name { width: 100px; }
.props th, .props td { height: 19px; padding: 0 0 0 3px; border-bottom: 1px solid #d8d8d8; font-weight: 400; text-align: left; white-space: nowrap; overflow: hidden; }
.props .tall th, .props .tall td { height: 20px; }
.props tbody th { border-right: 1px solid #d8d8d8; }
.props .tg { padding: 0 0 0 5px; }
.props thead th { height: 19px; background: #a0a0a0; color: #fff; }
.props tbody tr:nth-child(odd) { background: #f5f5f5; }
.props tbody tr:nth-child(even) { background: #fff; }
.props tbody .current { background: #f0f0f0; }
.current .tg { background: #fff; }
.tg svg { width: 10px; height: 10px; color: #999; }
.val { display: flex; align-items: center; gap: 6px; }
.swatch { flex: none; width: 16px; height: 16px; }
.black { background: #000; }
.lime { background: #2bff06; }
.teal { color: #3e6e62; }
.check { display: flex; align-items: center; gap: 6px; }
.check input { appearance: none; width: 13px; height: 13px; border: 1px solid #333; background: #fff; display: grid; place-items: center; }
.check input:checked::before { content: ""; width: 9px; height: 4px; border: solid #222; border-width: 0 0 1px 1px; transform: rotate(-45deg); }
.right .bottabs { margin-bottom: 5px; }
.notes { flex: 143 1 0; min-height: 0; display: flex; flex-direction: column; gap: 7px; margin-top: 2px; padding: 9px 9px 10px; border: solid #a0a0a0; border-width: 1px 0 0 1px; }
.notes textarea { flex: 1; min-height: 0; resize: none; border: 1px solid #ccc; }
.notebtns { display: flex; justify-content: space-between; padding: 0 1px; }
.push { width: 73px; height: 21px; border: 1px solid #adadad; background: #e1e1e1; }
.push:disabled { border-color: #bfbfbf; background: #ccc; color: #838383; }
.push.default { border: 2px solid #0078d7; }
.status { flex: none; height: 23px; border-bottom: 2px solid #1c1c26; }

.dialog { position: absolute; left: 335px; top: 306px; width: 502px; border: 1px solid #666; background: #f0f0f0; box-shadow: 0 4px 14px rgba(0, 0, 0, .4); }
.dlghead { display: flex; align-items: center; height: 30px; padding: 0 17px 0 8px; background: #fff; }
.dlghead h1 { flex: 1; padding-left: 5px; font-size: 12px; }
.dlghead button svg { width: 12px; height: 12px; }
.help { margin-right: 36px; font-size: 13px; }
.dlgbody { padding: 11px 12px 12px 11px; }
.dlgtabs { display: flex; align-items: flex-end; padding-left: 2px; }
.dlgtabs .tab { height: 19px; padding: 0 9px; border: 1px solid #d9d9d9; border-bottom: 0; }
.dlgtabs .active { height: 21px; padding: 0 11px; margin-bottom: -1px; z-index: 1; background: #fff; }
.pane { display: flex; align-items: center; gap: 7px; height: 161px; padding: 0 10px 0 9px; border: 1px solid #dcdcdc; background: #fff; }
.pane input { flex: 1; min-width: 0; height: 20px; padding: 0 2px; border: 1px solid #000; }
.labelrow { display: flex; align-items: center; gap: 6px; padding: 8px 0 7px; }
.labelrow input { width: 146px; height: 20px; border: 1px solid #7a7a7a; background: #fff; }
.combo-target { width: 146px; }
.actions { display: flex; justify-content: flex-end; gap: 8px; }
```
